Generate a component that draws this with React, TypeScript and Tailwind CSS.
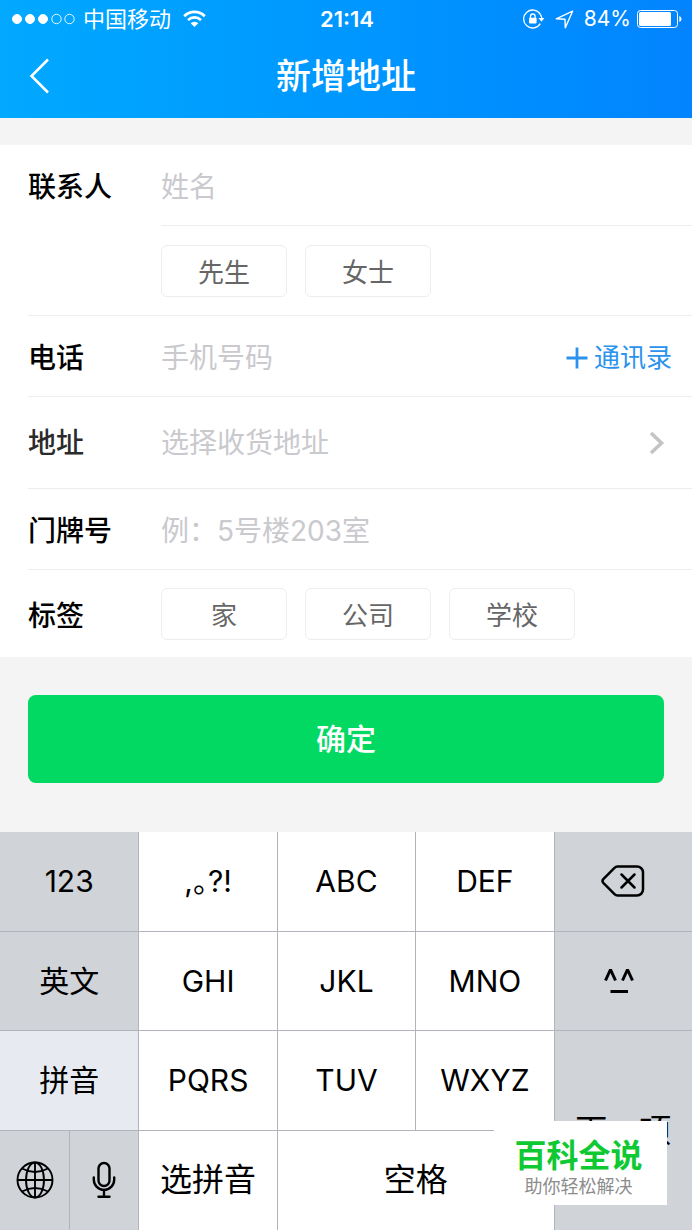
import { useState } from "react";
import type { ReactNode } from "react";
import clsx from "clsx";

const GENDERS = ["先生", "女士"];
const TAGS = ["家", "公司", "学校"];

function StatusBar() {
  return (
    <div className="grid grid-cols-[1fr_auto_1fr] items-center pl-3 pr-[10px] text-[22px] leading-[38px]">
      <div className="flex items-center gap-2">
        <svg width="63" height="12" viewBox="0 0 63 12" fill="#fff" stroke="#fff" aria-hidden="true">
          <circle cx="5" cy="6" r="4.5" />
          <circle cx="18" cy="6" r="4.5" />
          <circle cx="31" cy="6" r="4.5" />
          <circle cx="44.5" cy="6" r="4.7" fill="none" strokeWidth="0.9" />
          <circle cx="57.5" cy="6" r="4.7" fill="none" strokeWidth="0.9" />
        </svg>
        <span>中国移动</span>
        <svg className="ml-1" width="23" height="18" viewBox="0 0 23 18" fill="none" stroke="#fff" aria-label="Wi-Fi">
          <path d="M1.2 6.2a14.6 14.6 0 0 1 20.6 0" strokeWidth="2.7" />
          <path d="M5 10.1a9.2 9.2 0 0 1 13 0" strokeWidth="2.6" />
          <path d="M11.5 17 7.7 13.2a5.4 5.4 0 0 1 7.6 0z" fill="#fff" stroke="none" />
        </svg>
      </div>
      <span className="font-semibold">21:14</span>
      <div className="flex items-center justify-end">
        <svg className="mr-[10px]" width="22" height="20" viewBox="0 0 22 20" fill="none" stroke="#fff" aria-label="旋转锁定">
          <path d="M17.3 5.3A9 9 0 1 0 17.3 14.7" strokeWidth="1.3" />
          <path d="M17.3 5.3Q18.8 7.6 18.8 9.5" strokeWidth="1.3" />
          <path d="M15.4 9h6l-3 3.8z" fill="#fff" stroke="none" />
          <rect x="6" y="8.8" width="7.6" height="5.6" rx="0.8" fill="#fff" stroke="none" />
          <path d="M7.5 9V7.3a2.3 2.3 0 0 1 4.6 0V9" strokeWidth="1.3" />
        </svg>
        <svg className="mr-[10px]" width="19" height="19" viewBox="0 0 19 19" fill="none" stroke="#fff" strokeWidth="1.4" strokeLinejoin="round" aria-label="定位">
          <path d="M17.6 1.2 1.2 8.8l8.8.4.3 8.6z" />
        </svg>
        <span className="text-[21px]">84%</span>
        <svg className="ml-1.5" width="45" height="18" viewBox="0 0 45 18" aria-label="电量">
          <rect x="0.5" y="0.5" width="40" height="17" rx="3" fill="none" stroke="#fff" />
          <rect x="2" y="2" width="32" height="14" rx="1.5" fill="#fff" />
          <path d="M42.3 6v6c1.3-.5 2.2-1.6 2.2-3s-.9-2.5-2.2-3z" fill="#fff" />
        </svg>
      </div>
    </div>
  );
}

function Chip({ label, active, onClick }: { label: string; active: boolean; onClick: () => void }) {
  return (
    <button
      type="button"
      aria-pressed={active}
      onClick={onClick}
      className={clsx(
        "w-[126px] rounded-md border pt-2 pb-1 text-[26px] leading-[38px]",
        active ? "border-[#2394f0] text-[#2394f0]" : "border-[#ededee] text-[#666]"
      )}
    >
      {label}
    </button>
  );
}

function Key({ children, label, className }: { children: ReactNode; label?: string; className?: string }) {
  return (
    <button
      type="button"
      aria-label={label}
      className={clsx("flex items-center justify-center border-b border-l border-[#b1b4ba]", className)}
    >
      {children}
    </button>
  );
}

function Keyboard() {
  return (
    <div className="relative grid flex-1 grid-cols-10 grid-rows-4 text-[30px] leading-[40px] text-black">
      <Key className="col-span-2 border-l-0 bg-[#d0d3d8]">123</Key>
      <Key className="col-span-2 bg-white [font-feature-settings:'halt']">,。?!</Key>
      <Key className="col-span-2 bg-white">ABC</Key>
      <Key className="col-span-2 bg-white">DEF</Key>
      <Key className="col-span-2 bg-[#d0d3d8]" label="删除">
        <svg width="44" height="32" viewBox="0 0 44 32" fill="none" stroke="#000" strokeWidth="2.5" strokeLinecap="round" strokeLinejoin="round">
          <path d="M16.5 1.5H36a6 6 0 0 1 6 6v17a6 6 0 0 1-6 6H16.5q-1.7 0-3-1.3L2.3 17.8q-1.6-1.8 0-3.6L13.5 2.8q1.300-1.300 3-1.300z" />
          <path d="m20.500 9.500 13 13m0-13-13 13" />
        </svg>
      </Key>

      <Key className="col-span-2 border-l-0 bg-[#d0d3d8]">英文</Key>
      <Key className="col-span-2 bg-white">GHI</Key>
      <Key className="col-span-2 bg-white">JKL</Key>
      <Key className="col-span-2 bg-white">MNO</Key>
      <Key className="col-span-2 bg-[#d0d3d8]" label="颜文字">
        <svg className="mr-2" width="32" height="26" viewBox="0 0 32 26" fill="none" stroke="#000" strokeWidth="3">
          <path d="M2.500 12.500 7.500 1.500l5 11M19.500 12.500l5-11 5 11" strokeLinejoin="bevel" />
          <path d="M7.500 23.500h17.500" />
        </svg>
      </Key>

      <Key className="col-span-2 border-l-0 bg-[#e7ebf1]">拼音</Key>
      <Key className="col-span-2 bg-white">PQRS</Key>
      <Key className="col-span-2 bg-white">TUV</Key>
      <Key className="col-span-2 bg-white">WXYZ</Key>
      <Key className="col-span-2 row-span-2 border-b-0 bg-[#d0d3d8] text-[32px]">下一项</Key>

      <Key className="border-b-0 border-l-0 bg-[#d0d3d8]" label="切换键盘">
        <svg width="38" height="38" viewBox="0 0 38 38" fill="none" stroke="#000" strokeWidth="1.9">
          <circle cx="19" cy="19" r="17.5" />
          <ellipse cx="19" cy="19" rx="9" ry="17.5" />
          <path d="M19 1.500v35M1.500 19h35" />
          <path d="M6 7.500q13 7 26 0M6 30.500q13-7 26 0" />
        </svg>
      </Key>
      <Key className="border-b-0 bg-[#d0d3d8]" label="语音输入">
        <svg width="24" height="38" viewBox="0 0 24 38" fill="none" stroke="#000" strokeWidth="2.4" strokeLinecap="round">
          <rect x="6.5" y="2" width="11" height="23" rx="5.5" />
          <path d="M1.800 16.500v2.200a10.200 10.200 0 0 0 20.400 0v-2.200" />
          <path d="M12 29v6M6.500 35.700h11" />
        </svg>
      </Key>
      <Key className="col-span-2 border-b-0 bg-white text-[32px]">选拼音</Key>
      <Key className="col-span-4 border-b-0 bg-white text-[32px]">空格</Key>

      <div className="absolute right-[25px] bottom-[25px] w-[173px] bg-white pt-4 pr-1 pb-1.5 text-center">
        <p className="text-[32px] leading-[38px] font-bold text-[#0fc933]">百科全说</p>
        <p className="text-[18px] leading-6 text-[#8c8c8c]">助你轻松解决</p>
      </div>
    </div>
  );
}

export default function App() {
  const [gender, setGender] = useState("");
  const [tag, setTag] = useState("");

  const rowClass = "flex items-center border-b border-[#ededee] pt-[22px] pb-[18px]";
  const labelClass = "w-[133px] shrink-0 text-[28px] leading-[40px] font-medium";
  const inputClass =
    "min-w-0 flex-1 bg-transparent text-[28px] leading-[40px] text-black outline-none placeholder:text-[#c9c9ce] placeholder:opacity-100";

  return (
    <div className="flex min-h-screen flex-col bg-[#f4f4f4] font-['Inter','Noto_Sans_CJK_SC',sans-serif]">
      <header className="bg-linear-to-r from-[#02a9ff] to-[#0384ff] text-white">
        <StatusBar />
        <div className="grid grid-cols-[1fr_auto_1fr] items-center pb-1">
          <button type="button" aria-label="返回" className="justify-self-start pl-7">
            <svg width="22" height="36" viewBox="0 0 22 36" fill="none" stroke="#fff" strokeWidth="2.5">
              <path d="M20 1.500 3.500 18 20 34.500" />
            </svg>
          </button>
          <h1 className="text-[35px] leading-[76px] font-medium">新增地址</h1>
        </div>
      </header>

      <form className="flex flex-col" onSubmit={(e) => e.preventDefault()}>
        <div className="mt-[27px] bg-white pl-7">
          <div className="flex border-b border-[#ededee]">
            <label htmlFor="name" className={clsx(labelClass, "pt-[22px] text-black")}>
              联系人
            </label>
            <div className="min-w-0 flex-1">
              <div className={rowClass}>
                <input id="name" type="text" placeholder="姓名" className={inputClass} />
              </div>
              <div className="flex gap-[18px] pt-[19px] pb-[18px]" role="group" aria-label="称呼">
                {GENDERS.map((g) => (
                  <Chip key={g} label={g} active={gender === g} onClick={() => setGender(g)} />
                ))}
              </div>
            </div>
          </div>

          <div className={clsx(rowClass, "pr-5")}>
            <label htmlFor="phone" className={clsx(labelClass, "text-black")}>
              电话
            </label>
            <input id="phone" type="tel" placeholder="手机号码" className={inputClass} />
            <button type="button" className="flex shrink-0 items-center gap-1.5 text-[26px] leading-[40px] text-[#2b93ee]">
              <svg width="22" height="22" viewBox="0 0 22 22" stroke="currentColor" strokeWidth="2.8" aria-hidden="true">
                <path d="M11 0.500v21M0.500 11h21" />
              </svg>
              通讯录
            </button>
          </div>

          <div className="flex items-center border-b border-[#ededee] pt-[26px] pb-[25px] pr-[27px]">
            <label htmlFor="address" className={clsx(labelClass, "text-[#2b2b2b]")}>
              地址
            </label>
            <button id="address" type="button" className="flex flex-1 items-center justify-between text-left text-[28px] leading-[40px] text-[#c9c9ce]">
              选择收货地址
              <svg width="16" height="24" viewBox="0 0 16 24" fill="none" stroke="#c4c4c4" strokeWidth="3.600" aria-hidden="true">
                <path d="M2 2 12.500 12 2 22" />
              </svg>
            </button>
          </div>

          <div className={rowClass}>
            <label htmlFor="door" className={clsx(labelClass, "text-black")}>
              门牌号
            </label>
            <input id="door" type="text" placeholder="例：5号楼203室" className={inputClass} />
          </div>

          <div className="flex items-center pt-[18px] pb-[17px]">
            <span id="tag-label" className={clsx(labelClass, "pt-1 text-black")}>
              标签
            </span>
            <div className="flex gap-[18px]" role="group" aria-labelledby="tag-label">
              {TAGS.map((t) => (
                <Chip key={t} label={t} active={tag === t} onClick={() => setTag(t)} />
              ))}
            </div>
          </div>
        </div>

        <button
          type="submit"
          className="mx-7 mt-[38px] mb-[49px] rounded-lg bg-[#02d962] py-6 text-[30px] leading-[40px] font-medium text-white"
        >
          确定
        </button>
      </form>

      <Keyboard />
    </div>
  );
}
